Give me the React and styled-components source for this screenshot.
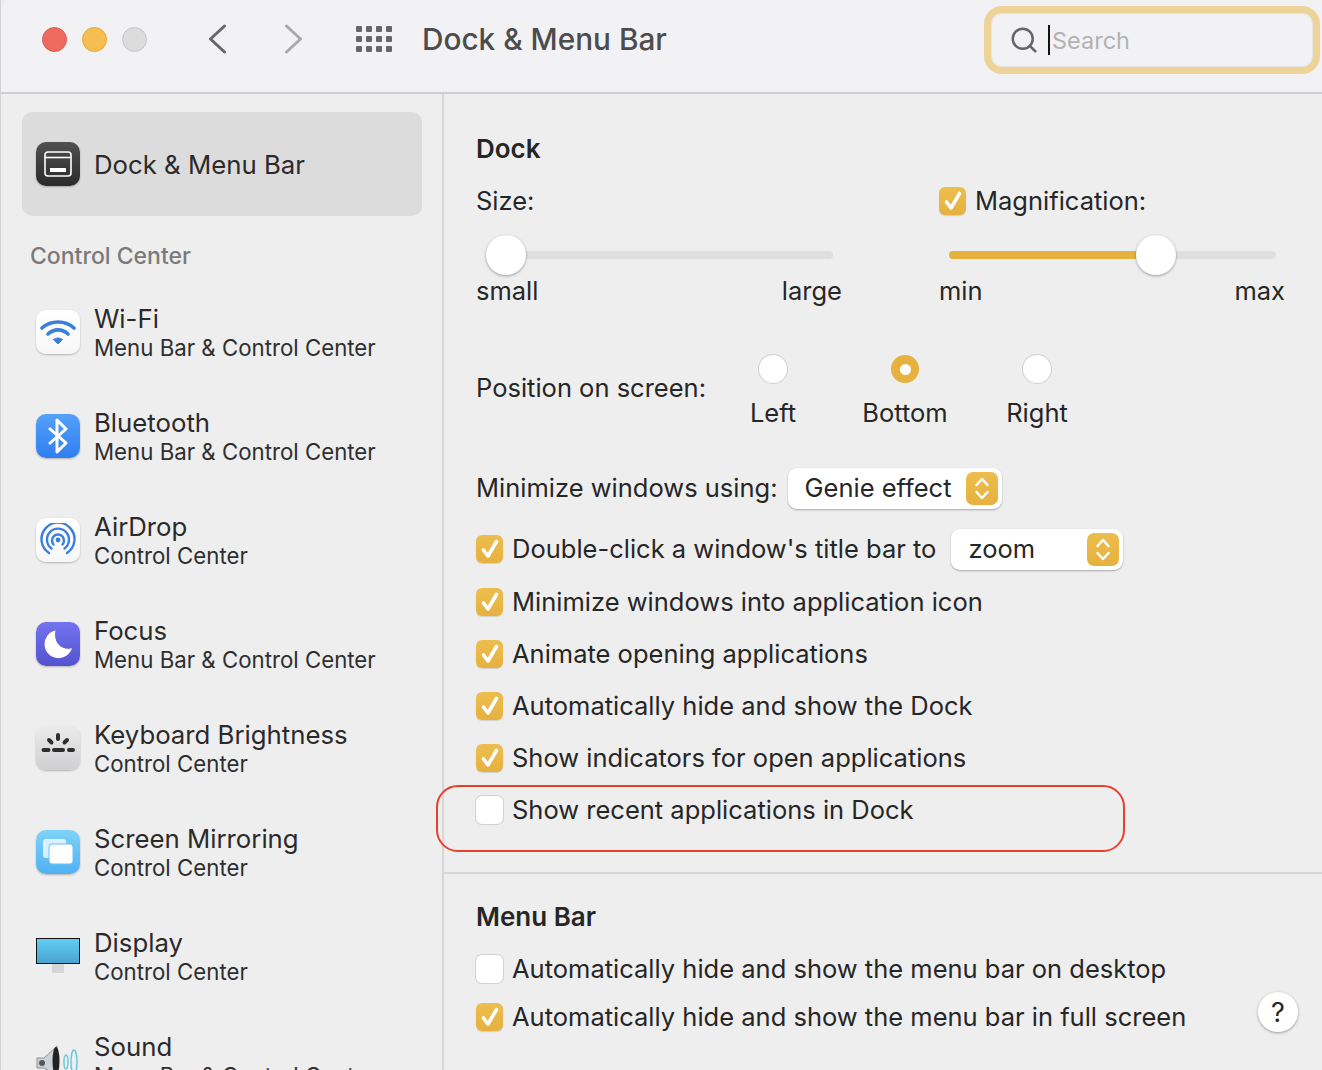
import React from 'react';
import styled, { createGlobalStyle } from 'styled-components';
import { Search as SearchGlyph } from 'lucide-react';

const GlobalStyle = createGlobalStyle`
  html, body { margin: 0; padding: 0; background: #eeeeee; }
  * { box-sizing: border-box; }
`;

const Window = styled.div`
  position: relative;
  width: 1322px;
  height: 1070px;
  overflow: hidden;
  background: #eeeeee;
  color: #262626;
  font-family: Inter, "Liberation Sans", sans-serif;
  font-size: 25.5px;
  border-left: 1px solid #d4d4d4;
`;

const TitleBar = styled.header`
  height: 94px;
  display: flex;
  align-items: flex-start;
  background: #f2f2f4;
  border-bottom: 2px solid #cfcfcf;
  border-top-left-radius: 10px;
`;

const Lights = styled.div`
  display: flex;
  gap: 15px;
  margin: 27px 0 0 41px;
`;

const Light = styled.span`
  width: 25px;
  height: 25px;
  border-radius: 50%;
  background: ${p => p.$color};
  border: 1px solid ${p => p.$edge};
`;

const NavButton = styled.span`
  display: flex;
  width: 19px;
  height: 30px;
  align-items: center;
  justify-content: center;
  margin: 24px 0 0 ${p => p.$left}px;
  color: ${p => p.$dim ? '#a9a9a9' : '#666666'};
`;

const GridIcon = styled.div`
  display: grid;
  grid-template-columns: repeat(4, 6px);
  grid-auto-rows: 6px;
  gap: 4px;
  margin: 26px 0 0 53px;
  span { background: #666666; border-radius: 1px; }
`;

const WindowTitle = styled.h1`
  margin: 17px 0 0 30px;
  font-size: 29.75px;
  line-height: 44px;
  font-weight: 500;
  color: #4c4c4c;
`;

const SearchBox = styled.div`
  display: flex;
  align-items: center;
  width: 336px;
  height: 68px;
  margin: 6px 2px 0 auto;
  padding-left: 18px;
  border: 7px solid #eed398;
  border-radius: 18px;
  background: #f2f2f4;
  box-shadow: inset 0 0 0 1px #e6e6e6;
  color: #666666;
`;

const Caret = styled.span`
  width: 2px;
  height: 30px;
  margin-left: 9px;
  background: #111111;
`;

const Placeholder = styled.span`
  margin-left: 2px;
  color: #b2b2b2;
  font-size: 23.5px;
`;

const Body = styled.div`
  display: flex;
  height: 976px;
`;

const Sidebar = styled.aside`
  width: 443px;
  flex-shrink: 0;
  padding: 18px 20px 0 21px;
  border-right: 2px solid #d6d6d6;
  overflow: hidden;
`;

const SideItem = styled.div`
  display: flex;
  align-items: center;
  height: 104px;
  padding-left: 14px;
  border-radius: 10px;
  background: ${p => p.$active ? '#dcdcdc' : 'transparent'};
`;

const SideHeading = styled.div`
  height: 30px;
  margin: 25px 0 9px 8px;
  font-size: 23px;
  line-height: 30px;
  font-weight: 500;
  color: #7a7a7a;
`;

const IconTile = styled.span`
  display: flex;
  width: 44px;
  height: 44px;
  flex-shrink: 0;
  align-items: center;
  justify-content: center;
  border-radius: 10px;
  background: ${p => p.$bg};
  box-shadow: ${p => p.$flat ? 'none' : '0 1px 2px rgba(0, 0, 0, 0.25)'};
`;

const SideText = styled.div`
  margin-left: 14px;
`;

const SideTitle = styled.div`
  margin-top: ${p => p.$solo ? 2 : 0}px;
  font-size: 25.75px;
  line-height: 32px;
  color: #2a2a2a;
`;

const SideSub = styled.div`
  margin-top: -1px;
  font-size: 22.25px;
  line-height: 27px;
  color: #2f2f2f;
`;

const Content = styled.main`
  flex: 1;
  min-width: 0;
`;

const DockSection = styled.section`
  height: 780px;
  padding: 36px 0 0 32px;
  border-bottom: 2px solid #d6d6d6;
`;

const MenuSection = styled.section`
  position: relative;
  padding: 24px 0 0 32px;
`;

const SectionTitle = styled.h2`
  margin: 0;
  font-size: 26px;
  line-height: 38px;
  font-weight: 600;
  color: #262626;
`;

const SliderRow = styled.div`
  display: flex;
  height: 150px;
  margin-top: 19px;
`;

const SliderGroup = styled.div`
  width: ${p => p.$width}px;
  margin-left: ${p => p.$left || 0}px;
`;

const SliderHead = styled.div`
  display: flex;
  align-items: center;
  height: 28px;
  line-height: 28px;
`;

const Track = styled.div`
  position: relative;
  height: 8px;
  margin: 36px ${p => p.$inset[1]}px 0 ${p => p.$inset[0]}px;
  border-radius: 4px;
  background: #dfdfdf;
`;

const TrackFill = styled.div`
  height: 100%;
  border-radius: 4px;
  background: #e6b13e;
`;

const Thumb = styled.span`
  position: absolute;
  top: -16px;
  width: 40px;
  height: 40px;
  border-radius: 50%;
  background: #ffffff;
  box-shadow: 0 1px 3px rgba(0, 0, 0, 0.35);
`;

const ScaleLabels = styled.div`
  display: flex;
  justify-content: space-between;
  margin-top: 16px;
  line-height: 32px;
`;

const PositionRow = styled.div`
  display: flex;
  height: 99px;
  margin-top: 18px;
`;

const PositionLabel = styled.span`
  width: 257px;
  margin-top: 17px;
  line-height: 32px;
`;

const RadioOption = styled.div`
  display: flex;
  width: ${p => p.$width}px;
  height: 74px;
  flex-direction: column;
  align-items: center;
  gap: 14px;
  margin-right: ${p => p.$gap || 0}px;
  line-height: 32px;
`;

const Radio = styled.span`
  display: flex;
  width: 28px;
  height: 28px;
  flex-shrink: 0;
  align-items: center;
  justify-content: center;
  border-radius: 50%;
  background: ${p => p.$on ? '#e6b13e' : '#ffffff'};
  box-shadow: ${p => p.$on ? 'none' : '0 0 0 1px #cfcfcf'};
  i { width: 11px; height: 11px; border-radius: 50%; background: #ffffff; }
`;

const Row = styled.div`
  display: flex;
  align-items: center;
  height: ${p => p.$height || 52}px;
  margin-top: ${p => p.$top || 0}px;
  line-height: 32px;
`;

const Box = styled.span`
  display: flex;
  width: 27px;
  height: 28px;
  flex-shrink: 0;
  align-items: center;
  justify-content: center;
  margin-right: 9px;
  border-radius: 6px;
  background: ${p => p.$on ? 'linear-gradient(#ecbe4e, #e6b13e)' : '#ffffff'};
  box-shadow: ${p => p.$on ? '0 1px 1px rgba(0, 0, 0, 0.12)' : '0 0 0 1px #d2d2d2'};
`;

const Select = styled.div`
  display: flex;
  align-items: center;
  justify-content: space-between;
  width: ${p => p.$width}px;
  height: 41px;
  margin-left: ${p => p.$left}px;
  padding: 0 4px 0 17px;
  border-radius: 9px;
  background: #ffffff;
  box-shadow: 0 1px 2px rgba(0, 0, 0, 0.3);
`;

const Stepper = styled.span`
  display: flex;
  width: 32px;
  height: 33px;
  align-items: center;
  justify-content: center;
  border-radius: 7px;
  background: linear-gradient(#ecbe4e, #e6b13e);
`;

const Annotation = styled.div`
  position: absolute;
  left: 435px;
  top: 785px;
  width: 689px;
  height: 67px;
  border: 2px solid #e9402c;
  border-radius: 22px;
  pointer-events: none;
`;

const HelpButton = styled.span`
  position: absolute;
  right: 24px;
  top: 118px;
  display: flex;
  width: 40px;
  height: 40px;
  align-items: center;
  justify-content: center;
  border-radius: 50%;
  background: #ffffff;
  box-shadow: 0 1px 3px rgba(0, 0, 0, 0.35);
  font-size: 27px;
`;

const Chevron = ({ d }) => (
  <svg width="19" height="30" viewBox="0 0 19 30" fill="none" stroke="currentColor" strokeWidth="3" strokeLinecap="round" strokeLinejoin="round">
    <path d={d} />
  </svg>
);

const Tick = () => (
  <svg width="22" height="24" viewBox="0 0 22 24" fill="none" stroke="#fff" strokeWidth="3.6" strokeLinecap="round" strokeLinejoin="round">
    <path d="M4.500 13L9 19L17.500 4.500" />
  </svg>
);

const DockGlyph = () => (
  <svg width="28" height="26" viewBox="0 0 28 26" fill="none">
    <rect x="1" y="1" width="26" height="24" rx="3" stroke="#fff" strokeWidth="1.6" />
    <path d="M1 6.500h26" stroke="#fff" strokeWidth="1.6" />
    <rect x="6" y="17" width="16" height="4" fill="#fff" />
  </svg>
);

const WifiGlyph = () => (
  <svg width="36" height="28" viewBox="0 0 36 28" fill="none" stroke="#3a7fdc" strokeLinecap="round">
    <path d="M2 10C11 2 25 2 34 10" strokeWidth="3.6" />
    <path d="M8 16C14 10.500 22 10.500 28 16" strokeWidth="3.6" />
    <path d="M13.500 21.500L18 26l4.500-4.500C19.500 19.500 16.500 19.500 13.500 21.500Z" fill="#3a7fdc" strokeWidth="1" />
  </svg>
);

const BluetoothGlyph = () => (
  <svg width="22" height="36" viewBox="0 0 22 36" fill="none" stroke="#fff" strokeWidth="3" strokeLinejoin="round">
    <path d="M2 10L19 25L10 34V2L19 11L2 26" />
  </svg>
);

const AirdropGlyph = () => (
  <svg width="36" height="34" viewBox="0 0 36 34" fill="none" stroke="#3a7fdc" strokeWidth="2.4" strokeLinecap="round">
    <path d="M9 30A16.500 16.500 0 1 1 27 30" />
    <path d="M11.500 25.500A11 11 0 1 1 24.500 25.500" />
    <path d="M13.500 21.500A6 6 0 1 1 22.500 21.500" />
    <circle cx="18" cy="17" r="2.400" fill="#3a7fdc" stroke="none" />
  </svg>
);

const MoonGlyph = () => (
  <svg width="30" height="30" viewBox="0 0 30 30">
    <path d="M12.500 1.500A14 14 0 1 0 29 19C21 22.500 9.500 15 12.500 1.500Z" fill="#fff" />
  </svg>
);

const BrightnessGlyph = () => (
  <svg width="36" height="30" viewBox="0 0 36 30" fill="none" stroke="#2e2e2e" strokeWidth="4" strokeLinecap="round">
    <path d="M3.500 17h5M14 17h9M29 17h4M18 2v4M9 7l2.500 2.500M27 7l-2.500 2.500" />
  </svg>
);

const MirrorGlyph = () => (
  <svg width="30" height="26" viewBox="0 0 30 26">
    <rect x="0" y="0" width="23" height="19" rx="3" fill="#fff" fillOpacity="0.75" />
    <rect x="6" y="5" width="24" height="20" rx="3" fill="#fff" stroke="#6cc0f5" strokeWidth="1" />
  </svg>
);

const DisplayGlyph = () => (
  <svg width="44" height="36" viewBox="0 0 44 36">
    <defs>
      <linearGradient id="screen" x1="0" y1="0" x2="0" y2="1">
        <stop offset="0" stopColor="#60cdf6" />
        <stop offset="1" stopColor="#4aa3cf" />
      </linearGradient>
    </defs>
    <rect x="16" y="25" width="12" height="10" rx="1" fill="#d6d6d6" />
    <rect x="0.500" y="0.500" width="43" height="25" fill="url(#screen)" stroke="#111" />
  </svg>
);

const SoundGlyph = () => (
  <svg width="44" height="44" viewBox="0 0 44 44" fill="none">
    <path d="M1 20h7l13-12v30L8 30H1Z" fill="#cfd3d6" stroke="#8b8f92" />
    <circle cx="6" cy="25" r="3" fill="#55595c" />
    <ellipse cx="20" cy="23" rx="3.500" ry="14" fill="#222" />
    <ellipse cx="30" cy="24" rx="2" ry="7" stroke="#6cc7dc" strokeWidth="1.500" />
    <ellipse cx="38" cy="24" rx="3" ry="12" stroke="#6cc7dc" strokeWidth="1.500" />
  </svg>
);

const UpDown = () => (
  <svg width="16" height="25" viewBox="0 0 16 25" fill="none" stroke="#fff" strokeWidth="2.400" strokeLinecap="round" strokeLinejoin="round">
    <path d="M2.500 9L8 3l5.500 6M2.500 16L8 22l5.500-6" />
  </svg>
);

const sideItems = [
  { title: 'Wi-Fi', sub: 'Menu Bar & Control Center', bg: 'linear-gradient(#ffffff, #f7f7f7)', icon: <WifiGlyph /> },
  { title: 'Bluetooth', sub: 'Menu Bar & Control Center', bg: 'linear-gradient(#55a0fa, #2f7ff0)', icon: <BluetoothGlyph /> },
  { title: 'AirDrop', sub: 'Control Center', bg: 'linear-gradient(#ffffff, #f7f7f7)', icon: <AirdropGlyph /> },
  { title: 'Focus', sub: 'Menu Bar & Control Center', bg: 'linear-gradient(#7474f0, #5353cf)', icon: <MoonGlyph /> },
  { title: 'Keyboard Brightness', sub: 'Control Center', bg: 'linear-gradient(#ececec, #cfcfd1)', icon: <BrightnessGlyph /> },
  { title: 'Screen Mirroring', sub: 'Control Center', bg: 'linear-gradient(#7fd3f9, #4fb0f3)', icon: <MirrorGlyph /> },
  { title: 'Display', sub: 'Control Center', bg: 'transparent', flat: true, icon: <DisplayGlyph /> },
  { title: 'Sound', sub: 'Menu Bar & Control Center', bg: 'transparent', flat: true, icon: <SoundGlyph /> },
];

const dockChecks = [
  { label: 'Minimize windows into application icon', on: true },
  { label: 'Animate opening applications', on: true },
  { label: 'Automatically hide and show the Dock', on: true },
  { label: 'Show indicators for open applications', on: true },
  { label: 'Show recent applications in Dock', on: false },
];

const CheckBox = ({ on }) => <Box $on={on}>{on && <Tick />}</Box>;

const App = () => (
  <Window>
    <GlobalStyle />
    <TitleBar>
      <Lights>
        <Light $color="#ef6a5e" $edge="#dd5a4e" />
        <Light $color="#f6bd50" $edge="#e3a93c" />
        <Light $color="#dcdcdc" $edge="#c6c6c6" />
      </Lights>
      <NavButton $left={61}><Chevron d="M16.500 2L2.500 15L16.500 28" /></NavButton>
      <NavButton $left={57} $dim><Chevron d="M2.500 2L16.500 15L2.500 28" /></NavButton>
      <GridIcon>
        {Array.from({ length: 12 }, (_, i) => <span key={i} />)}
      </GridIcon>
      <WindowTitle>Dock &amp; Menu Bar</WindowTitle>
      <SearchBox>
        <SearchGlyph size={30} strokeWidth={2} />
        <Caret />
        <Placeholder>Search</Placeholder>
      </SearchBox>
    </TitleBar>
    <Body>
      <Sidebar>
        <SideItem $active>
          <IconTile $bg="linear-gradient(#505050, #2a2a2a)"><DockGlyph /></IconTile>
          <SideText><SideTitle $solo>Dock &amp; Menu Bar</SideTitle></SideText>
        </SideItem>
        <SideHeading>Control Center</SideHeading>
        {sideItems.map(item => (
          <SideItem key={item.title}>
            <IconTile $bg={item.bg} $flat={item.flat}>{item.icon}</IconTile>
            <SideText>
              <SideTitle>{item.title}</SideTitle>
              <SideSub>{item.sub}</SideSub>
            </SideText>
          </SideItem>
        ))}
      </Sidebar>
      <Content>
        <DockSection>
          <SectionTitle>Dock</SectionTitle>
          <SliderRow>
            <SliderGroup $width={366}>
              <SliderHead>Size:</SliderHead>
              <Track $inset={[29, 9]}>
                <Thumb style={{ left: -19 }} />
              </Track>
              <ScaleLabels><span>small</span><span>large</span></ScaleLabels>
            </SliderGroup>
            <SliderGroup $width={346} $left={97}>
              <SliderHead><CheckBox on />Magnification:</SliderHead>
              <Track $inset={[10, 9]}>
                <TrackFill style={{ width: '58%' }} />
                <Thumb style={{ left: '57.3%' }} />
              </Track>
              <ScaleLabels><span>min</span><span>max</span></ScaleLabels>
            </SliderGroup>
          </SliderRow>
          <PositionRow>
            <PositionLabel>Position on screen:</PositionLabel>
            <RadioOption $width={80} $gap={42}><Radio />Left</RadioOption>
            <RadioOption $width={100} $gap={42}><Radio $on><i /></Radio>Bottom</RadioOption>
            <RadioOption $width={80}><Radio />Right</RadioOption>
          </PositionRow>
          <Row $height={68}>
            Minimize windows using:
            <Select $width={214} $left={10}>Genie effect<Stepper><UpDown /></Stepper></Select>
          </Row>
          <Row $height={54}>
            <CheckBox on />
            Double-click a window's title bar to
            <Select $width={172} $left={15}>zoom<Stepper><UpDown /></Stepper></Select>
          </Row>
          {dockChecks.map(row => (
            <Row key={row.label}>
              <CheckBox on={row.on} />
              {row.label}
            </Row>
          ))}
        </DockSection>
        <MenuSection>
          <SectionTitle>Menu Bar</SectionTitle>
          <Row $height={50} $top={8}>
            <CheckBox />
            Automatically hide and show the menu bar on desktop
          </Row>
          <Row $height={46}>
            <CheckBox on />
            Automatically hide and show the menu bar in full screen
          </Row>
          <HelpButton>?</HelpButton>
        </MenuSection>
      </Content>
    </Body>
    <Annotation />
  </Window>
);

export default App;
